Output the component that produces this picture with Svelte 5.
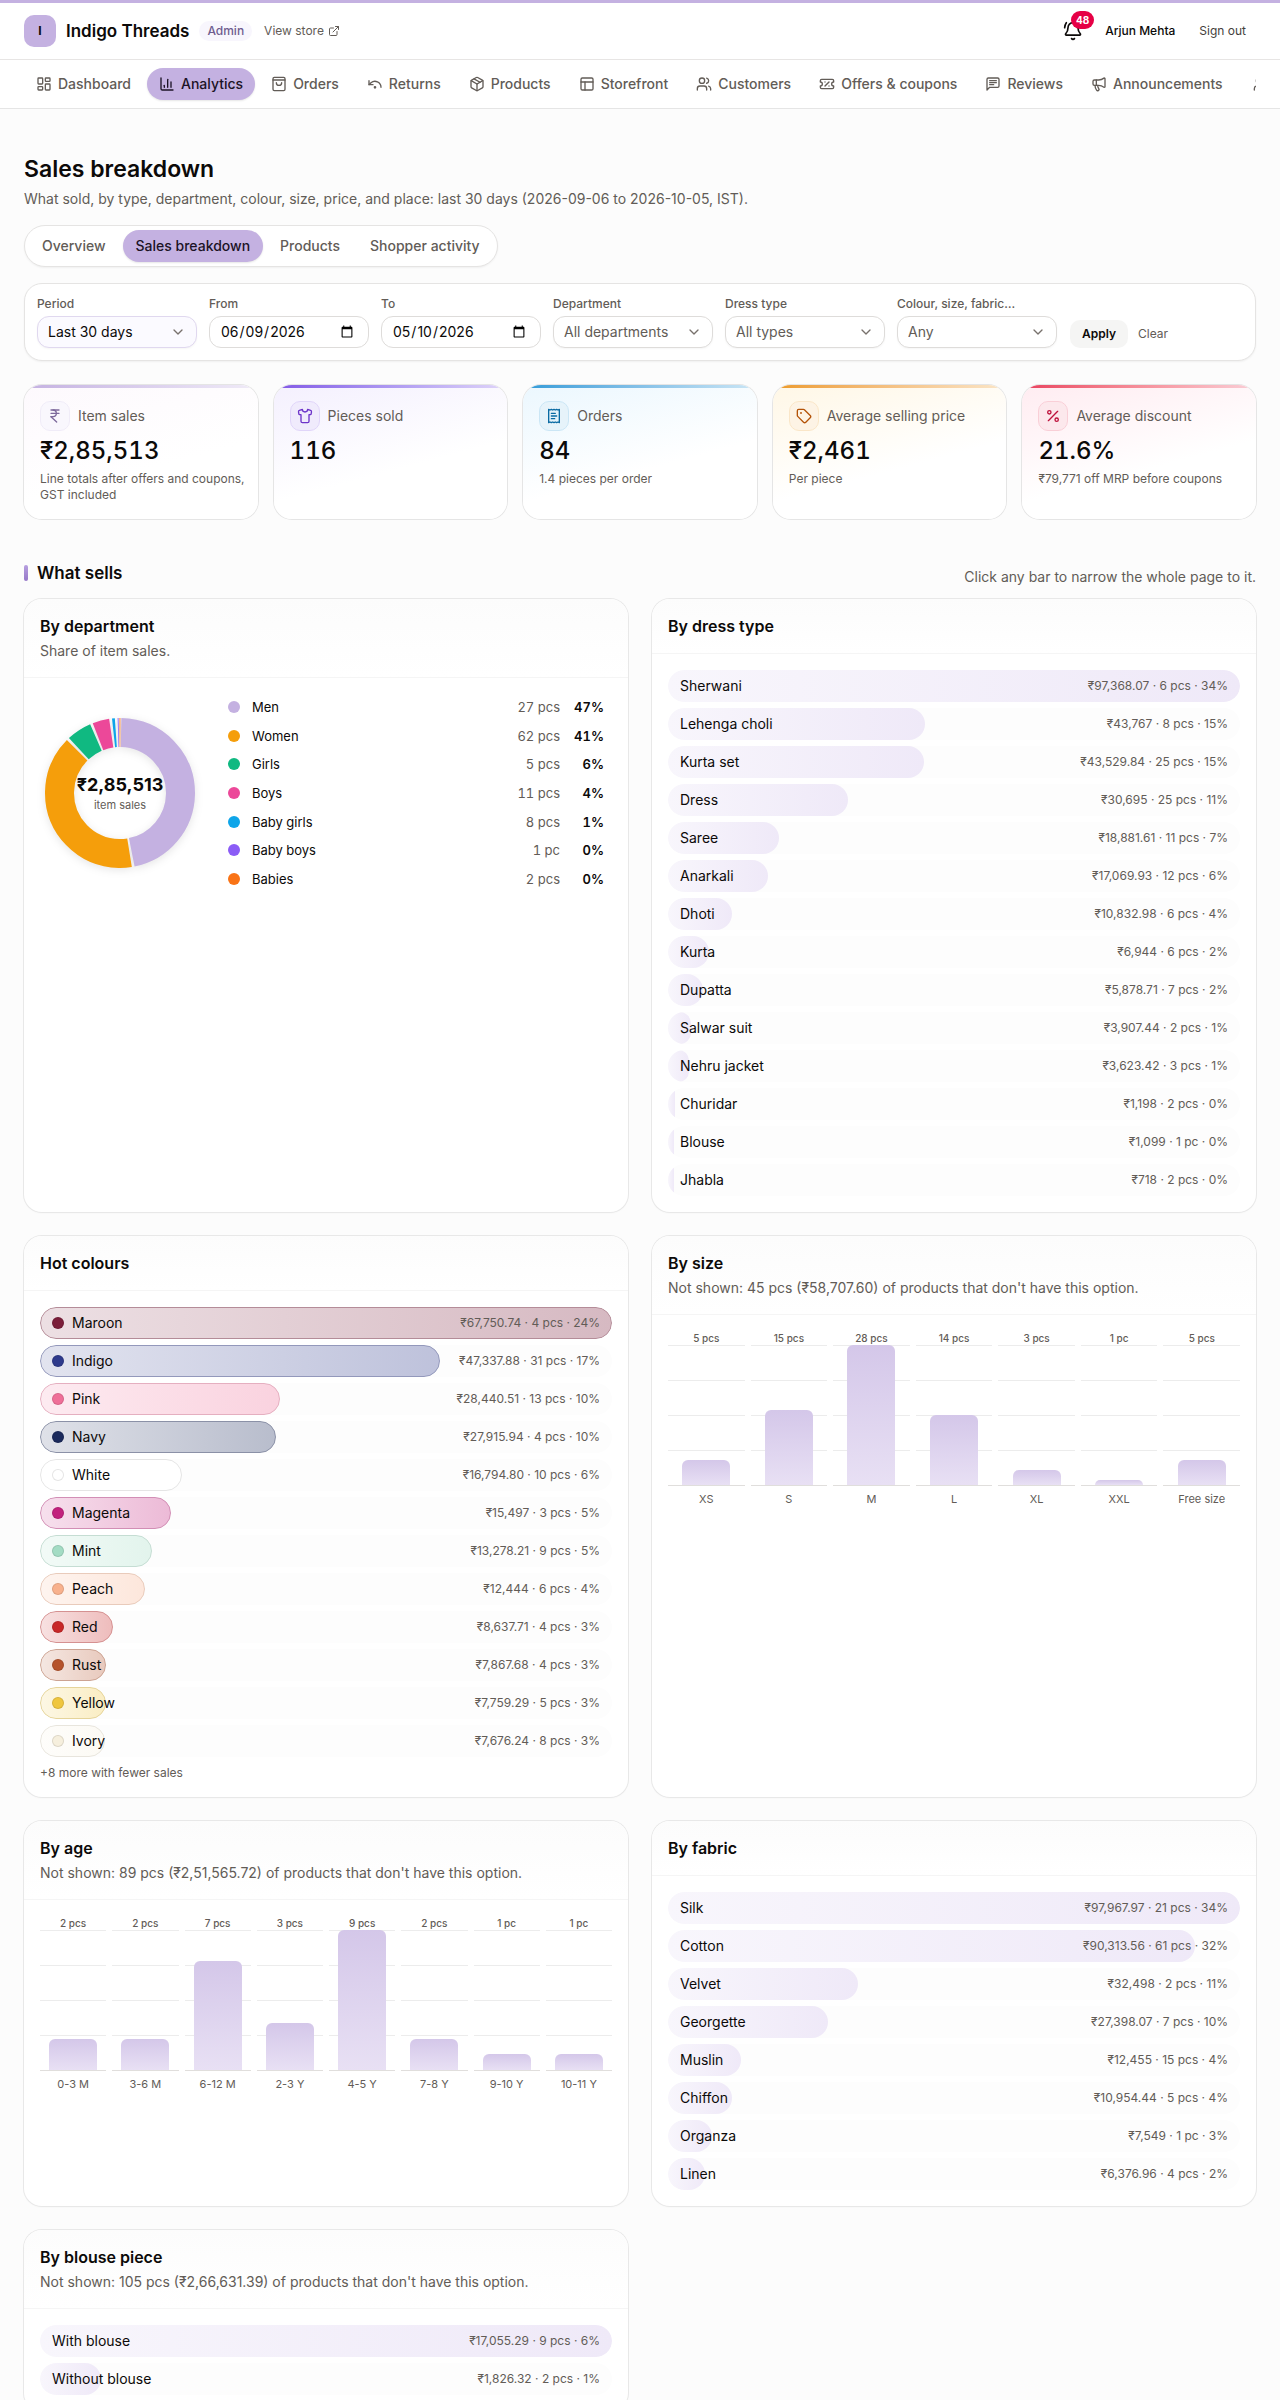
<script>
	const icons = {
		dashboard: '<rect width="7" height="9" x="3" y="3" rx="1"/><rect width="7" height="5" x="14" y="3" rx="1"/><rect width="7" height="9" x="14" y="12" rx="1"/><rect width="7" height="5" x="3" y="16" rx="1"/>',
		chart: '<path d="M3 3v16a2 2 0 0 0 2 2h16"/><path d="M18 17V9"/><path d="M13 17V5"/><path d="M8 17v-3"/>',
		bag: '<rect width="18" height="20" x="3" y="2" rx="2"/><path d="M3 6h18"/><path d="M16 10a4 4 0 0 1-8 0"/>',
		undo: '<path d="M21 17a9 9 0 0 0-15-6.7L3 13"/><path d="M3 7v6h6"/><circle cx="12" cy="17" r="1"/>',
		box: '<path d="M11 21.73a2 2 0 0 0 2 0l7-4A2 2 0 0 0 21 16V8a2 2 0 0 0-1-1.73l-7-4a2 2 0 0 0-2 0l-7 4A2 2 0 0 0 3 8v8a2 2 0 0 0 1 1.73z"/><path d="M12 22V12"/><path d="m3.3 7 8.7 5 8.7-5"/><path d="m7.5 4.27 9 5.15"/>',
		panels: '<rect width="18" height="18" x="3" y="3" rx="2"/><path d="M3 9h18"/><path d="M9 21V9"/>',
		users: '<path d="M16 21v-2a4 4 0 0 0-4-4H6a4 4 0 0 0-4 4v2"/><circle cx="9" cy="7" r="4"/><path d="M22 21v-2a4 4 0 0 0-3-3.87"/><path d="M16 3.13a4 4 0 0 1 0 7.75"/>',
		ticket: '<path d="M2 9a3 3 0 1 1 0 6v2a2 2 0 0 0 2 2h16a2 2 0 0 0 2-2v-2a3 3 0 1 1 0-6V7a2 2 0 0 0-2-2H4a2 2 0 0 0-2 2Z"/><path d="M9 9h.01"/><path d="m15 9-6 6"/><path d="M15 15h.01"/>',
		message: '<path d="M21 15a2 2 0 0 1-2 2H7l-4 4V5a2 2 0 0 1 2-2h14a2 2 0 0 1 2 2z"/><path d="M7 7h10"/><path d="M7 10h10"/><path d="M7 13h6"/>',
		megaphone: '<path d="M11 6a13 13 0 0 0 8.4-2.8A1 1 0 0 1 21 4v12a1 1 0 0 1-1.6.8A13 13 0 0 0 11 14H5a2 2 0 0 1-2-2V8a2 2 0 0 1 2-2z"/><path d="M6 14a12 12 0 0 0 2.4 7.2 2 2 0 0 0 3.2-2.4A8 8 0 0 1 10 14"/><path d="M8 6v8"/>',
		user: '<path d="M19 21v-2a4 4 0 0 0-4-4H9a4 4 0 0 0-4 4v2"/><circle cx="12" cy="7" r="4"/>',
		bell: '<path d="M10.268 21a2 2 0 0 0 3.464 0"/><path d="M22 8c0-2.3-.8-4.3-2-6"/><path d="M3.262 15.326A1 1 0 0 0 4 17h16a1 1 0 0 0 .74-1.673C19.41 13.956 18 12.499 18 8A6 6 0 0 0 6 8c0 4.499-1.411 5.956-2.738 7.326"/><path d="M4 2C2.8 3.7 2 5.7 2 8"/>',
		external: '<path d="M15 3h6v6"/><path d="M10 14 21 3"/><path d="M18 13v6a2 2 0 0 1-2 2H5a2 2 0 0 1-2-2V8a2 2 0 0 1 2-2h6"/>',
		chevron: '<path d="m6 9 6 6 6-6"/>',
		rupee: '<path d="M6 3h12"/><path d="M6 8h12"/><path d="m6 13 8.5 8"/><path d="M6 13h3"/><path d="M9 13c6.667 0 6.667-10 0-10"/>',
		shirt: '<path d="M20.38 3.46 16 2a4 4 0 0 1-8 0L3.62 3.46a2 2 0 0 0-1.34 2.23l.58 3.47a1 1 0 0 0 .99.84H6v10c0 1.1.9 2 2 2h8a2 2 0 0 0 2-2V10h2.15a1 1 0 0 0 .99-.84l.58-3.47a2 2 0 0 0-1.34-2.23z"/>',
		receipt: '<path d="M4 2v20l2-1 2 1 2-1 2 1 2-1 2 1 2-1 2 1V2l-2 1-2-1-2 1-2-1-2 1-2-1-2 1Z"/><path d="M14 8H8"/><path d="M16 12H8"/><path d="M13 16H8"/>',
		tag: '<path d="M12.586 2.586A2 2 0 0 0 11.172 2H4a2 2 0 0 0-2 2v7.172a2 2 0 0 0 .586 1.414l8.704 8.704a2.426 2.426 0 0 0 3.42 0l6.58-6.58a2.426 2.426 0 0 0 0-3.42z"/><circle cx="7.5" cy="7.5" r=".5" fill="currentColor"/>',
		percent: '<path d="M19 5 5 19"/><circle cx="6.5" cy="6.5" r="2.5"/><circle cx="17.5" cy="17.5" r="2.5"/>'
	};

	const nav = [
		{ label: 'Dashboard', icon: 'dashboard' },
		{ label: 'Analytics', icon: 'chart', active: true },
		{ label: 'Orders', icon: 'bag' },
		{ label: 'Returns', icon: 'undo' },
		{ label: 'Products', icon: 'box' },
		{ label: 'Storefront', icon: 'panels' },
		{ label: 'Customers', icon: 'users' },
		{ label: 'Offers & coupons', icon: 'ticket' },
		{ label: 'Reviews', icon: 'message' },
		{ label: 'Announcements', icon: 'megaphone' }
	];

	const tabs = ['Overview', 'Sales breakdown', 'Products', 'Shopper activity'];
	let activeTab = $state('Sales breakdown');

	const stats = [
		{ label: 'Item sales', icon: 'rupee', value: '₹2,85,513', note: 'Line totals after offers and coupons, GST included', tone: 'lilac' },
		{ label: 'Pieces sold', icon: 'shirt', value: '116', note: '', tone: 'violet' },
		{ label: 'Orders', icon: 'receipt', value: '84', note: '1.4 pieces per order', tone: 'sky' },
		{ label: 'Average selling price', icon: 'tag', value: '₹2,461', note: 'Per piece', tone: 'amber' },
		{ label: 'Average discount', icon: 'percent', value: '21.6%', note: '₹79,771 off MRP before coupons', tone: 'rose' }
	];

	const departments = [
		{ name: 'Men', pcs: '27 pcs', pct: '47%', share: 47.2, color: '#c4b1e1' },
		{ name: 'Women', pcs: '62 pcs', pct: '41%', share: 40.6, color: '#f59e0b' },
		{ name: 'Girls', pcs: '5 pcs', pct: '6%', share: 6, color: '#10b981' },
		{ name: 'Boys', pcs: '11 pcs', pct: '4%', share: 4.2, color: '#ec4899' },
		{ name: 'Baby girls', pcs: '8 pcs', pct: '1%', share: 1.2, color: '#0ea5e9' },
		{ name: 'Baby boys', pcs: '1 pc', pct: '0%', share: 0.4, color: '#8b5cf6' },
		{ name: 'Babies', pcs: '2 pcs', pct: '0%', share: 0.4, color: '#f97316' }
	];

	let start = 0;
	const slices = departments.map((d) => {
		const gap = Math.min(0.6, d.share / 2);
		const slice = { color: d.color, dash: d.share - gap, offset: -start };
		start += d.share;
		return slice;
	});

	const types = [
		['Sherwani', 97368.07, '₹97,368.07 · 6 pcs · 34%'],
		['Lehenga choli', 43767, '₹43,767 · 8 pcs · 15%'],
		['Kurta set', 43529.84, '₹43,529.84 · 25 pcs · 15%'],
		['Dress', 30695, '₹30,695 · 25 pcs · 11%'],
		['Saree', 18881.61, '₹18,881.61 · 11 pcs · 7%'],
		['Anarkali', 17069.93, '₹17,069.93 · 12 pcs · 6%'],
		['Dhoti', 10832.98, '₹10,832.98 · 6 pcs · 4%'],
		['Kurta', 6944, '₹6,944 · 6 pcs · 2%'],
		['Dupatta', 5878.71, '₹5,878.71 · 7 pcs · 2%'],
		['Salwar suit', 3907.44, '₹3,907.44 · 2 pcs · 1%'],
		['Nehru jacket', 3623.42, '₹3,623.42 · 3 pcs · 1%'],
		['Churidar', 1198, '₹1,198 · 2 pcs · 0%'],
		['Blouse', 1099, '₹1,099 · 1 pc · 0%'],
		['Jhabla', 718, '₹718 · 2 pcs · 0%']
	];

	const colours = [
		['Maroon', 67750.74, '₹67,750.74 · 4 pcs · 24%', '#7b1e3a'],
		['Indigo', 47337.88, '₹47,337.88 · 31 pcs · 17%', '#2e3a8c'],
		['Pink', 28440.51, '₹28,440.51 · 13 pcs · 10%', '#ef6f98'],
		['Navy', 27915.94, '₹27,915.94 · 4 pcs · 10%', '#1b2a5c'],
		['White', 16794.8, '₹16,794.80 · 10 pcs · 6%', '#ffffff'],
		['Magenta', 15497, '₹15,497 · 3 pcs · 5%', '#c2217d'],
		['Mint', 13278.21, '₹13,278.21 · 9 pcs · 5%', '#a3dcc4'],
		['Peach', 12444, '₹12,444 · 6 pcs · 4%', '#f8b18d'],
		['Red', 8637.71, '₹8,637.71 · 4 pcs · 3%', '#c82828'],
		['Rust', 7867.68, '₹7,867.68 · 4 pcs · 3%', '#b5532c'],
		['Yellow', 7759.29, '₹7,759.29 · 5 pcs · 3%', '#efc63f'],
		['Ivory', 7676.24, '₹7,676.24 · 8 pcs · 3%', '#f6efdd']
	];

	const fabrics = [
		['Silk', 97967.97, '₹97,967.97 · 21 pcs · 34%'],
		['Cotton', 90313.56, '₹90,313.56 · 61 pcs · 32%'],
		['Velvet', 32498, '₹32,498 · 2 pcs · 11%'],
		['Georgette', 27398.07, '₹27,398.07 · 7 pcs · 10%'],
		['Muslin', 12455, '₹12,455 · 15 pcs · 4%'],
		['Chiffon', 10954.44, '₹10,954.44 · 5 pcs · 4%'],
		['Organza', 7549, '₹7,549 · 1 pc · 3%'],
		['Linen', 6376.96, '₹6,376.96 · 4 pcs · 2%']
	];

	const blouse = [
		['With blouse', 17055.29, '₹17,055.29 · 9 pcs · 6%'],
		['Without blouse', 1826.32, '₹1,826.32 · 2 pcs · 1%']
	];

	const sizes = [['XS', 5], ['S', 15], ['M', 28], ['L', 14], ['XL', 3], ['XXL', 1], ['Free size', 5]];
	const ages = [['0-3 M', 2], ['3-6 M', 2], ['6-12 M', 7], ['2-3 Y', 3], ['4-5 Y', 9], ['7-8 Y', 2], ['9-10 Y', 1], ['10-11 Y', 1]];
</script>

{#snippet icon(name, size = 16)}
	<svg class="icon" width={size} height={size} viewBox="0 0 24 24" aria-hidden="true">{@html icons[name]}</svg>
{/snippet}

{#snippet cardHead(title, note)}
	<header class="card-head">
		<h3>{title}</h3>
		{#if note}<p>{note}</p>{/if}
	</header>
{/snippet}

{#snippet bars(rows)}
	<ul class="bars">
		{#each rows as [name, amount, detail, colour]}
			<li>
				<button class="bar" type="button">
					<span
						class="fill"
						class:tinted={colour}
						class:white={name === 'White'}
						style:width="{(amount / rows[0][1]) * 100}%"
						style:--c={colour}
					></span>
					<span class="bar-name">
						{#if colour}<i class="swatch" style:background={colour}></i>{/if}
						{name}
					</span>
					<span class="bar-detail">{detail}</span>
				</button>
			</li>
		{/each}
	</ul>
{/snippet}

{#snippet columns(data)}
	{@const max = Math.max(...data.map((d) => d[1]))}
	<ul class="columns">
		{#each data as [name, count]}
			<li>
				<button class="column" type="button">
					<span class="count">{count} {count === 1 ? 'pc' : 'pcs'}</span>
					<span class="plot"><span class="col" style:height="{(count / max) * 100}%"></span></span>
					<span class="col-name">{name}</span>
				</button>
			</li>
		{/each}
	</ul>
{/snippet}

<header class="top">
	<div class="brand-row">
		<span class="logo">I</span>
		<span class="brand">Indigo Threads</span>
		<span class="role">Admin</span>
		<a class="store" href="#store">View store {@render icon('external', 12)}</a>
		<div class="account">
			<button class="bell" type="button" aria-label="Notifications">
				{@render icon('bell', 20)}
				<span class="badge">48</span>
			</button>
			<span class="person">Arjun Mehta</span>
			<button class="sign-out" type="button">Sign out</button>
		</div>
	</div>
	<nav>
		{#each nav as item}
			<a href="#{item.icon}" class:active={item.active}>{@render icon(item.icon)}{item.label}</a>
		{/each}
		<a href="#account" aria-label="Account">{@render icon('user')}</a>
	</nav>
</header>

<main>
	<h1>Sales breakdown</h1>
	<p class="lead">What sold, by type, department, colour, size, price, and place: last 30 days (2026-09-06 to 2026-10-05, IST).</p>

	<div class="tabs">
		{#each tabs as tab}
			<button type="button" class:active={tab === activeTab} onclick={() => (activeTab = tab)}>{tab}</button>
		{/each}
	</div>

	<form class="filters" onsubmit={(e) => e.preventDefault()}>
		<div class="field">
			<label for="period">Period</label>
			<div class="select set">
				<select id="period"><option>Last 30 days</option></select>
				{@render icon('chevron')}
			</div>
		</div>
		<div class="field">
			<label for="from">From</label>
			<input id="from" type="date" value="2026-06-09" />
		</div>
		<div class="field">
			<label for="to">To</label>
			<input id="to" type="date" value="2026-05-10" />
		</div>
		<div class="field">
			<label for="department">Department</label>
			<div class="select">
				<select id="department"><option>All departments</option></select>
				{@render icon('chevron')}
			</div>
		</div>
		<div class="field">
			<label for="type">Dress type</label>
			<div class="select">
				<select id="type"><option>All types</option></select>
				{@render icon('chevron')}
			</div>
		</div>
		<div class="field">
			<label for="option">Colour, size, fabric…</label>
			<div class="select">
				<select id="option"><option>Any</option></select>
				{@render icon('chevron')}
			</div>
		</div>
		<div class="actions">
			<button class="apply" type="submit">Apply</button>
			<button class="clear" type="reset">Clear</button>
		</div>
	</form>

	<section class="stats">
		{#each stats as stat}
			<article class="stat {stat.tone}">
				<div class="stat-head">
					<span class="stat-icon">{@render icon(stat.icon)}</span>
					{stat.label}
				</div>
				<div class="stat-value">{stat.value}</div>
				<p>{stat.note}</p>
			</article>
		{/each}
	</section>

	<div class="section-head">
		<h2>What sells</h2>
		<p>Click any bar to narrow the whole page to it.</p>
	</div>

	<section class="grid">
		<article class="card">
			{@render cardHead('By department', 'Share of item sales.')}
			<div class="body split">
				<div class="donut">
					<svg viewBox="0 0 160 160" role="img" aria-label="Share of item sales by department">
						<g transform="rotate(-89 80 80)">
							{#each slices as slice}
								<circle
									cx="80"
									cy="80"
									r="60.5"
									pathLength="100"
									stroke={slice.color}
									stroke-dasharray="{slice.dash} 100"
									stroke-dashoffset={slice.offset}
								/>
							{/each}
						</g>
					</svg>
					<div class="donut-label">
						<strong>₹2,85,513</strong>
						<span>item sales</span>
					</div>
				</div>
				<ul class="legend">
					{#each departments as d}
						<li>
							<i style:background={d.color}></i>
							<span class="dep">{d.name}</span>
							<span class="pcs">{d.pcs}</span>
							<b>{d.pct}</b>
						</li>
					{/each}
				</ul>
			</div>
		</article>

		<article class="card">
			{@render cardHead('By dress type')}
			<div class="body">{@render bars(types)}</div>
		</article>

		<article class="card">
			{@render cardHead('Hot colours')}
			<div class="body">
				{@render bars(colours)}
				<p class="more">+8 more with fewer sales</p>
			</div>
		</article>

		<article class="card">
			{@render cardHead('By size', "Not shown: 45 pcs (₹58,707.60) of products that don't have this option.")}
			<div class="body">{@render columns(sizes)}</div>
		</article>

		<article class="card">
			{@render cardHead('By age', "Not shown: 89 pcs (₹2,51,565.72) of products that don't have this option.")}
			<div class="body">{@render columns(ages)}</div>
		</article>

		<article class="card">
			{@render cardHead('By fabric')}
			<div class="body">{@render bars(fabrics)}</div>
		</article>

		<article class="card">
			{@render cardHead('By blouse piece', "Not shown: 105 pcs (₹2,66,631.39) of products that don't have this option.")}
			<div class="body">{@render bars(blouse)}</div>
		</article>
	</section>
</main>

<style>
	:global(body) {
		background: #fcfcfc;
		color: #0c0a09;
		font-family: Inter, 'Liberation Sans', sans-serif;
		font-size: 14px;
		line-height: 20px;
	}
	h1,
	h2,
	h3,
	p,
	ul {
		margin: 0;
		padding: 0;
		font-weight: 400;
		list-style: none;
	}
	button,
	input,
	select {
		font: inherit;
		color: inherit;
		border: none;
		background: none;
		padding: 0;
		cursor: pointer;
	}
	a {
		color: inherit;
		text-decoration: none;
	}
	.icon {
		flex: none;
		fill: none;
		stroke: currentColor;
		stroke-width: 2;
		stroke-linecap: round;
		stroke-linejoin: round;
	}

	.top {
		background: #fff;
		border-top: 3px solid #c4b1e1;
		border-bottom: 1px solid #e5e5e5;
	}
	.brand-row {
		display: flex;
		align-items: center;
		height: 56px;
		padding: 0 24px;
		border-bottom: 1px solid #e7e5e4;
	}
	.logo {
		display: grid;
		place-items: center;
		width: 32px;
		height: 32px;
		border-radius: 10px;
		background: #c4b1e1;
		font-size: 12px;
		font-weight: 700;
	}
	.brand {
		margin-left: 10px;
		font-size: 17px;
		font-weight: 600;
	}
	.role {
		margin-left: 10px;
		padding: 0 8px;
		border-radius: 10px;
		background: #f8f6fd;
		color: #6f5d8f;
		font-size: 12px;
		font-weight: 500;
	}
	.store {
		display: flex;
		align-items: center;
		gap: 4px;
		margin-left: 12px;
		color: #625c57;
		font-size: 12px;
	}
	.account {
		display: flex;
		align-items: center;
		margin-left: auto;
		font-size: 12px;
	}
	.bell {
		position: relative;
		display: grid;
		place-items: center;
		width: 36px;
		height: 36px;
	}
	.badge {
		position: absolute;
		top: -2px;
		right: -3px;
		min-width: 10px;
		padding: 0 5px;
		border-radius: 9px;
		background: #e60045;
		color: #fff;
		font-size: 10px;
		font-weight: 700;
		line-height: 18px;
	}
	.person {
		margin-left: 14px;
		font-weight: 500;
	}
	.sign-out {
		margin-left: 14px;
		padding: 0 10px;
		color: #44403c;
		line-height: 28px;
	}
	nav {
		display: flex;
		gap: 4px;
		margin: 0 24px;
		padding: 8px 0;
		overflow: hidden;
	}
	nav a {
		display: flex;
		flex: none;
		align-items: center;
		gap: 6px;
		height: 32px;
		padding: 0 12px;
		border-radius: 16px;
		color: #625c57;
		font-weight: 500;
	}
	nav a.active,
	.tabs button.active {
		background: #c4b1e1;
		color: #1c1326;
		box-shadow: 0 1px 2px rgb(0 0 0 / 0.1);
	}

	main {
		padding: 44px 24px 40px;
	}
	h1 {
		font-size: 23px;
		font-weight: 600;
		line-height: 32px;
	}
	.lead {
		margin-top: 4px;
		color: #625c57;
	}
	.tabs {
		display: flex;
		gap: 4px;
		width: fit-content;
		margin-top: 16px;
		padding: 4px;
		border: 1px solid #e5e4e3;
		border-radius: 21px;
		background: #fff;
		box-shadow: 0 1px 2px rgb(0 0 0 / 0.05);
	}
	.tabs button {
		height: 32px;
		padding: 0 13px;
		border-radius: 16px;
		color: #625c57;
		font-weight: 500;
	}

	.filters {
		display: flex;
		flex-wrap: wrap;
		align-items: flex-end;
		gap: 12px;
		margin-top: 16px;
		padding: 12px;
		border: 1px solid #e5e4e3;
		border-radius: 18px;
		background: #fff;
		box-shadow: 0 1px 2px rgb(0 0 0 / 0.05);
	}
	.field {
		width: 160px;
	}
	.field label {
		display: block;
		margin-bottom: 4px;
		color: #625c57;
		font-size: 12px;
		font-weight: 500;
		line-height: 16px;
	}
	.field input,
	.select {
		box-sizing: border-box;
		width: 100%;
		height: 32px;
		border: 1px solid #dedcda;
		border-radius: 12px;
		background: #fff;
	}
	.field input {
		padding: 0 12px 0 10px;
	}
	.select {
		display: grid;
		align-items: center;
		color: #625c57;
		box-shadow: 0 1px 2px rgb(0 0 0 / 0.04);
	}
	.select select {
		grid-area: 1 / 1;
		width: 100%;
		height: 30px;
		padding: 0 32px 0 10px;
		appearance: none;
	}
	.select .icon {
		grid-area: 1 / 1;
		justify-self: end;
		margin-right: 10px;
		color: #78716c;
		pointer-events: none;
	}
	.select.set {
		border-color: #e0d8ef;
		background: #fbfaff;
		color: #0c0a09;
	}
	.actions {
		display: flex;
		margin-left: 1px;
		font-size: 12px;
	}
	.apply,
	.clear {
		height: 28px;
		padding: 0 12px;
		border-radius: 10px;
	}
	.apply {
		background: #f5f5f4;
		font-weight: 600;
	}
	.clear {
		padding: 0 10px;
		color: #625c57;
	}

	.stats {
		display: grid;
		grid-template-columns: repeat(5, 1fr);
		gap: 16px;
		margin-top: 24px;
	}
	.stat {
		--tone: #c4b1e1;
		--ink: #7d6a9c;
		--wash: #fdf9fd;
		padding: 0 8px 16px 16px;
		border-radius: 18px;
		background: linear-gradient(165deg, var(--wash), #fff 60%);
		box-shadow: 0 0 0 1px #e5e5e5;
		overflow: hidden;
	}
	.stat::before {
		content: '';
		display: block;
		height: 3px;
		margin: 0 -8px 13px -16px;
		background: linear-gradient(90deg, var(--tone), color-mix(in srgb, var(--tone) 25%, white));
	}
	.violet {
		--tone: #8257e5;
		--ink: #6d34c9;
		--wash: #f4f0fe;
	}
	.sky {
		--tone: #2f9bd8;
		--ink: #0b6ba3;
		--wash: #ebf7fe;
	}
	.amber {
		--tone: #ec9a24;
		--ink: #b45309;
		--wash: #fff7e6;
	}
	.rose {
		--tone: #e8405f;
		--ink: #be123c;
		--wash: #ffecf1;
	}
	.stat-head {
		display: flex;
		align-items: center;
		gap: 8px;
		color: #625c57;
	}
	.stat-icon {
		display: grid;
		place-items: center;
		box-sizing: border-box;
		width: 30px;
		height: 30px;
		border: 1px solid color-mix(in srgb, var(--tone) 25%, white);
		border-radius: 10px;
		background: color-mix(in srgb, var(--tone) 12%, white);
		color: var(--ink);
	}
	.lilac .stat-icon {
		background: #f9f7fd;
	}
	.stat-value {
		margin: 4px 0;
		font-size: 24px;
		font-weight: 500;
		font-variant-numeric: tabular-nums;
		line-height: 32px;
	}
	.stat p {
		color: #625c57;
		font-size: 12px;
		line-height: 16px;
	}

	.section-head {
		display: flex;
		align-items: flex-end;
		justify-content: space-between;
		margin: 40px 0 12px;
		color: #625c57;
	}
	h2 {
		display: flex;
		align-items: center;
		gap: 9px;
		color: #0c0a09;
		font-size: 17px;
		font-weight: 600;
		line-height: 28px;
	}
	h2::before {
		content: '';
		width: 4px;
		height: 16px;
		border-radius: 2px;
		background: linear-gradient(#b79fe0, #9678c8);
	}

	.grid {
		display: grid;
		grid-template-columns: repeat(2, minmax(0, 1fr));
		gap: 24px;
	}
	.card {
		border-radius: 18px;
		background: #fff;
		box-shadow: 0 0 0 1px #e8e8e8, 0 1px 2px rgb(0 0 0 / 0.05);
		overflow: hidden;
	}
	.card-head {
		padding: 16px;
		border-bottom: 1px solid #f5f5f5;
		background: linear-gradient(#fcfcfc, #fff);
	}
	h3 {
		font-size: 16px;
		font-weight: 600;
		line-height: 22px;
	}
	.card-head p {
		margin-top: 4px;
		color: #625c57;
	}
	.body {
		padding: 16px;
	}

	.split {
		display: flex;
		align-items: center;
		gap: 20px;
	}
	.donut {
		display: grid;
		place-items: center;
		width: 160px;
	}
	.donut > * {
		grid-area: 1 / 1;
	}
	.donut svg {
		width: 160px;
		fill: none;
		stroke-width: 29px;
		filter: drop-shadow(0 2px 4px rgb(0 0 0 / 0.1));
	}
	.donut-label {
		position: relative;
		display: flex;
		flex-direction: column;
		align-items: center;
		color: #625c57;
		font-size: 11px;
		line-height: 16px;
	}
	.donut-label strong {
		color: #0c0a09;
		font-size: 18px;
		font-weight: 700;
		line-height: 24px;
	}
	.legend {
		flex: 1;
		display: flex;
		flex-direction: column;
		justify-content: space-between;
		min-height: 198px;
	}
	.legend li {
		display: flex;
		align-items: center;
		padding: 3px 8px;
		font-size: 13px;
		font-variant-numeric: tabular-nums;
	}
	.legend i {
		width: 12px;
		height: 12px;
		margin-right: 12px;
		border-radius: 50%;
	}
	.dep {
		flex: 1;
	}
	.pcs {
		color: #625c57;
	}
	.legend b {
		width: 44px;
		font-weight: 600;
		text-align: right;
	}

	.bars {
		display: grid;
		gap: 6px;
	}
	.bar {
		position: relative;
		display: flex;
		align-items: center;
		justify-content: space-between;
		width: 100%;
		height: 32px;
		padding: 0 12px;
		border-radius: 16px;
		background: #fdfdfd;
		overflow: hidden;
	}
	.fill {
		position: absolute;
		inset: 0 auto 0 0;
		box-sizing: border-box;
		min-width: 6px;
		border-radius: 16px;
		background: linear-gradient(90deg, #f8f6fc, #efe9f8);
	}
	.fill.tinted {
		border: 1px solid color-mix(in srgb, color-mix(in srgb, var(--c) 85%, black) 50%, white);
		background: linear-gradient(90deg, color-mix(in srgb, var(--c) 14%, white), color-mix(in srgb, var(--c) 31%, white));
	}
	.fill.white {
		border-color: #e5e5e5;
	}
	.bar-name,
	.bar-detail {
		position: relative;
		display: flex;
		align-items: center;
	}
	.swatch {
		box-sizing: border-box;
		width: 12px;
		height: 12px;
		margin-right: 8px;
		border: 1px solid rgb(0 0 0 / 0.1);
		border-radius: 50%;
	}
	.bar-detail {
		color: #625c57;
		font-size: 12px;
	}
	.more {
		margin-top: 8px;
		color: #625c57;
		font-size: 12px;
		line-height: 16px;
	}

	.columns {
		display: flex;
		gap: 6px;
	}
	.columns li {
		flex: 1;
	}
	.column {
		display: block;
		width: 100%;
		color: #625c57;
		font-size: 11px;
		line-height: 14px;
	}
	.count,
	.col-name {
		display: block;
	}
	.count {
		font-size: 10px;
		font-weight: 500;
	}
	.plot {
		display: flex;
		align-items: flex-end;
		justify-content: center;
		height: 140px;
		border-bottom: 1px solid #e0dedc;
		background: repeating-linear-gradient(#ececec 0 1px, transparent 1px 35px);
	}
	.col {
		width: 48px;
		border-radius: 6px 6px 0 0;
		background: linear-gradient(#d4c7e9, #e8e0f4);
	}
	.col-name {
		padding-top: 6px;
	}
</style>
